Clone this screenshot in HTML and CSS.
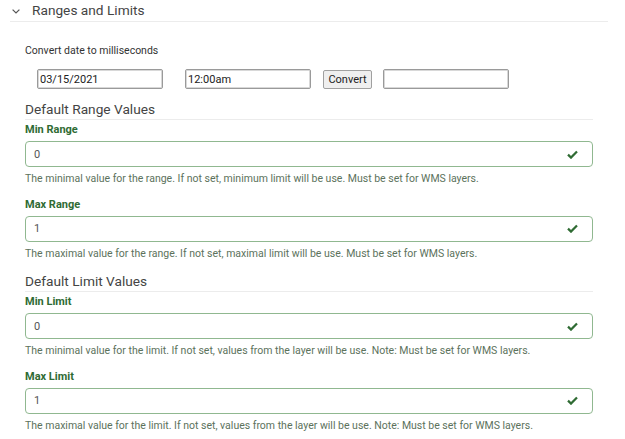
FILE: index.html
```html
<!DOCTYPE html>
<html>
<head>
<meta charset="utf-8">
<link rel="stylesheet" href="styles.css">
</head>
<body>
<div class="panel">
  <div class="panel-head">
    <svg class="chev" width="8" height="5" viewBox="0 0 8 5"><path d="M0.6 0.6 L4 4 L7.4 0.6" fill="none" stroke="#555" stroke-width="1.2"/></svg>
    <span class="panel-title">Ranges and Limits</span>
  </div>
  <div class="panel-body">
    <div class="convert-label">Convert date to milliseconds</div>
    <div class="convert-row">
      <input class="box date" type="text" value="03/15/2021">
      <input class="box time" type="text" value="12:00am">
      <button class="btn">Convert</button>
      <input class="box out" type="text" value="">
    </div>

    <div class="group-title">Default Range Values</div>
    <div class="field">
      <div class="label">Min Range</div>
      <div class="input-wrap"><span class="val">0</span><svg class="check" width="11" height="9" viewBox="0 0 11 9"><path d="M1 4.6 L4 7.6 L10 1.4" fill="none" stroke="#2f6b33" stroke-width="2.2"/></svg></div>
      <div class="help">The minimal value for the range. If not set, minimum limit will be use. Must be set for WMS layers.</div>
    </div>
    <div class="field">
      <div class="label">Max Range</div>
      <div class="input-wrap"><span class="val">1</span><svg class="check" width="11" height="9" viewBox="0 0 11 9"><path d="M1 4.6 L4 7.6 L10 1.4" fill="none" stroke="#2f6b33" stroke-width="2.2"/></svg></div>
      <div class="help">The maximal value for the range. If not set, maximal limit will be use. Must be set for WMS layers.</div>
    </div>

    <div class="group-title second">Default Limit Values</div>
    <div class="field">
      <div class="label">Min Limit</div>
      <div class="input-wrap"><span class="val">0</span><svg class="check" width="11" height="9" viewBox="0 0 11 9"><path d="M1 4.6 L4 7.6 L10 1.4" fill="none" stroke="#2f6b33" stroke-width="2.2"/></svg></div>
      <div class="help">The minimal value for the limit. If not set, values from the layer will be use. Note: Must be set for WMS layers.</div>
    </div>
    <div class="field">
      <div class="label">Max Limit</div>
      <div class="input-wrap"><span class="val">1</span><svg class="check" width="11" height="9" viewBox="0 0 11 9"><path d="M1 4.6 L4 7.6 L10 1.4" fill="none" stroke="#2f6b33" stroke-width="2.2"/></svg></div>
      <div class="help">The maximal value for the limit. If not set, values from the layer will be use. Note: Must be set for WMS layers.</div>
    </div>
  </div>
</div>
</body>
</html>
```

FILE: styles.css
```css
html, body {
  margin: 0;
  padding: 0;
  background: #ffffff;
}
body {
  font-family: Roboto, "Liberation Sans", sans-serif;
  color: #333;
}
.panel {
  width: 625px;
}
.panel-head {
  margin-left: 10px;
  width: 598px;
  height: 21px;
  border-bottom: 1px solid #ececec;
  display: flex;
  align-items: center;
}
.chev {
  margin-left: 2px;
  margin-right: 12px;
  margin-top: 1px;
}
.panel-title {
  font-size: 13.7px;
  color: #444;
  line-height: 21px;
}
.panel-body {
  padding-left: 25px;
  width: 568px;
}
.convert-label {
  font-size: 10.5px;
  color: #333;
  padding-top: 22px;
  line-height: 13px;
}
.convert-row {
  display: flex;
  align-items: center;
  margin-top: 12px;
  margin-left: 12px;
}
.box {
  box-sizing: border-box;
  width: 126px;
  height: 20px;
  border: 1px solid #9a9a9a;
  border-radius: 2px;
  font-family: Roboto, "Liberation Sans", sans-serif;
  font-size: 11px;
  color: #222;
  padding: 0 2px;
  outline: none;
  box-shadow: inset 0 0 0 1px #d8d8d8;
}
.time { margin-left: 22px; }
.btn {
  box-sizing: border-box;
  margin-left: 12px;
  width: 49px;
  height: 19px;
  border: 1px solid #a0a0a0;
  border-radius: 2px;
  background: #efefef;
  font-family: Roboto, "Liberation Sans", sans-serif;
  font-size: 11px;
  color: #222;
  padding: 0;
}
.out { margin-left: 11px; }
.group-title {
  font-size: 13.7px;
  color: #444;
  margin-top: 10px;
  line-height: 20px;
  height: 20px;
  border-bottom: 1px solid #ececec;
}
.group-title.second {
  margin-top: 2px;
}
.field {
  height: 74.5px;
  padding-top: 3px;
  box-sizing: border-box;
}
.label {
  font-size: 11px;
  font-weight: bold;
  color: #2f6b33;
  line-height: 13px;
}
.input-wrap {
  box-sizing: border-box;
  margin-top: 5px;
  height: 26px;
  border: 1.5px solid #90b890;
  border-radius: 4px;
  display: flex;
  align-items: center;
  justify-content: space-between;
  padding: 0 14px 0 8px;
}
.val {
  font-size: 11px;
  color: #555;
}
.help {
  font-size: 10.5px;
  color: #5c725c;
  margin-top: 5px;
  line-height: 13px;
}
```
